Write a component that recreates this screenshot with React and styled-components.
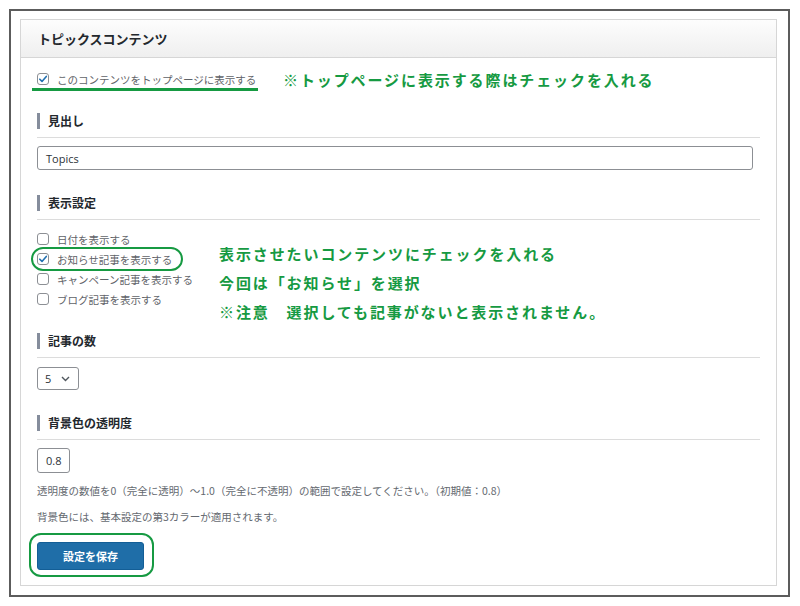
import React from "react";
import styled, { createGlobalStyle } from "styled-components";

const GlobalStyle = createGlobalStyle`
  html, body {
    margin: 0;
    padding: 0;
    background: #fff;
  }
  body {
    font-family: "Noto Sans CJK JP", "Noto Sans", sans-serif;
    color: #3c434a;
  }
`;

const GREEN = "#169a42";

const Frame = styled.div`
  box-sizing: border-box;
  width: 781px;
  height: 588px;
  margin: 9px 0 0 9px;
  border: 2px solid #5c5c5c;
  padding: 8px 0 0 9px;
`;

const Panel = styled.div`
  box-sizing: border-box;
  width: 757px;
  height: 567px;
  border: 1px solid #d6d6d6;
  background: #fff;
`;

const Header = styled.div`
  height: 37px;
  display: flex;
  align-items: center;
  padding-left: 17px;
  background: linear-gradient(#fdfdfd, #efefef);
  border-bottom: 1px solid #d6d6d6;
  font-size: 13px;
  font-weight: 700;
  color: #23282d;
`;

const Body = styled.div`
  padding: 0 16px;
`;

const TopRow = styled.div`
  display: flex;
  align-items: flex-start;
  margin-top: 12px;
`;

const Underlined = styled.div`
  display: flex;
  align-items: center;
  height: 18px;
  width: 221px;
  margin-left: -5px;
  padding-left: 5px;
  border-bottom: 3px solid ${GREEN};
`;

const Note = styled.div`
  font-size: 15px;
  font-weight: 700;
  color: ${GREEN};
  letter-spacing: 1.9px;
  line-height: ${(p) => p.$lh || "20px"};
  margin-left: ${(p) => p.$ml || "0"};
  margin-top: ${(p) => p.$mt || "0"};
  white-space: nowrap;
`;

const SectionTitle = styled.div`
  margin-top: ${(p) => p.$mt};
  padding-bottom: 8px;
  border-bottom: 1px solid #dcdcdc;
`;

const TitleText = styled.div`
  border-left: 3px solid #858d9c;
  padding-left: 8px;
  line-height: 16px;
  font-size: 12px;
  font-weight: 700;
  color: #23282d;
`;

const TextInput = styled.div`
  box-sizing: border-box;
  margin-top: 8px;
  width: ${(p) => p.$w};
  height: ${(p) => p.$h};
  border: 1px solid #8c8f94;
  border-radius: 3px;
  display: flex;
  align-items: center;
  padding-left: 8px;
  font-family: "Open Sans", "Noto Sans", sans-serif;
  font-size: 11px;
  color: #2c3338;
`;

const CheckRow = styled.label`
  position: relative;
  display: flex;
  align-items: center;
  height: 20px;
  font-size: 10.5px;
  color: #5f6368;
  white-space: nowrap;

  ${(p) =>
    p.$circled &&
    `
    &::after {
      content: "";
      position: absolute;
      left: -6px;
      top: -2px;
      width: 152px;
      height: 24px;
      box-sizing: border-box;
      border: 2.5px solid ${GREEN};
      border-radius: 12px;
    }
  `}
`;

const InlineLabel = styled.span`
  display: flex;
  align-items: center;
  font-size: 10.5px;
  color: #5f6368;
  white-space: nowrap;
`;

const Box = styled.span`
  box-sizing: border-box;
  width: 12px;
  height: 12px;
  border: 1px solid #8c8f94;
  border-radius: 3px;
  margin-right: 8px;
  display: flex;
  align-items: center;
  justify-content: center;
  background: #fff;
`;

const CheckList = styled.div`
  width: 182px;
  margin-top: 9px;
`;

const SplitRow = styled.div`
  display: flex;
  align-items: flex-start;
`;

const Select = styled.div`
  box-sizing: border-box;
  margin-top: 9px;
  width: 42px;
  height: 23px;
  border: 1px solid #8c8f94;
  border-radius: 3px;
  display: flex;
  align-items: center;
  justify-content: space-between;
  padding: 0 8px 0 7px;
  font-family: "Open Sans", "Noto Sans", sans-serif;
  font-size: 11px;
  color: #2c3338;
`;

const Help = styled.p`
  margin: 10px 0 0;
  line-height: 16px;
  font-size: 10.5px;
  color: #646970;
  white-space: nowrap;
`;

const ButtonRing = styled.div`
  position: relative;
  margin-top: 17px;
  width: 107px;

  &::after {
    content: "";
    position: absolute;
    left: -8px;
    top: -9px;
    right: -10px;
    bottom: -7px;
    border: 2.5px solid ${GREEN};
    border-radius: 12px;
  }
`;

const SaveButton = styled.button`
  box-sizing: border-box;
  display: block;
  width: 107px;
  height: 28px;
  border: 1px solid #135e96;
  border-radius: 3px;
  background: #1f6ea8;
  color: #fff;
  font-family: "Noto Sans CJK JP", sans-serif;
  font-size: 11px;
  font-weight: 700;
  padding: 0;
`;

const Check = ({ checked }) => (
  <Box>
    {checked && (
      <svg width="10" height="10" viewBox="0 0 10 10">
        <path d="M1.8 5.2 L4 7.4 L8.3 2.4" fill="none" stroke="#2271b1" strokeWidth="1.6" strokeLinecap="round" strokeLinejoin="round" />
      </svg>
    )}
  </Box>
);

const Chevron = () => (
  <svg width="9" height="6" viewBox="0 0 9 6">
    <path d="M1 1 L4.5 4.5 L8 1" fill="none" stroke="#50575e" strokeWidth="1.4" />
  </svg>
);

const options = [
  { id: "date", text: "日付を表示する", checked: false },
  { id: "news", text: "お知らせ記事を表示する", checked: true },
  { id: "campaign", text: "キャンペーン記事を表示する", checked: false },
  { id: "blog", text: "ブログ記事を表示する", checked: false },
];

const App = () => (
  <>
    <GlobalStyle />
    <Frame>
      <Panel>
        <Header>トピックスコンテンツ</Header>
        <Body>
          <TopRow>
            <Underlined>
              <InlineLabel>
                <Check checked />
                このコンテンツをトップページに表示する
              </InlineLabel>
            </Underlined>
            <Note $ml="25px">※トップページに表示する際はチェックを入れる</Note>
          </TopRow>

          <SectionTitle $mt="22px">
            <TitleText>見出し</TitleText>
          </SectionTitle>
          <TextInput $w="716px" $h="24px">Topics</TextInput>

          <SectionTitle $mt="25px">
            <TitleText>表示設定</TitleText>
          </SectionTitle>
          <SplitRow>
            <CheckList>
              {options.map(({ id, text, checked }) => (
                <CheckRow key={id} $circled={checked}>
                  <Check checked={checked} />
                  {text}
                </CheckRow>
              ))}
            </CheckList>
            <Note $lh="29px" $mt="19px">
              表示させたいコンテンツにチェックを入れる
              <br />
              今回は「お知らせ」を選択
              <br />
              ※注意　選択しても記事がないと表示されません。
            </Note>
          </SplitRow>

          <SectionTitle $mt="7px">
            <TitleText>記事の数</TitleText>
          </SectionTitle>
          <Select>
            5
            <Chevron />
          </Select>

          <SectionTitle $mt="25px">
            <TitleText>背景色の透明度</TitleText>
          </SectionTitle>
          <TextInput $w="33px" $h="25px">0.8</TextInput>
          <Help>透明度の数値を0（完全に透明）～1.0（完全に不透明）の範囲で設定してください。（初期値：0.8）</Help>
          <Help>背景色には、基本設定の第3カラーが適用されます。</Help>

          <ButtonRing>
            <SaveButton>設定を保存</SaveButton>
          </ButtonRing>
        </Body>
      </Panel>
    </Frame>
  </>
);

export default App;
